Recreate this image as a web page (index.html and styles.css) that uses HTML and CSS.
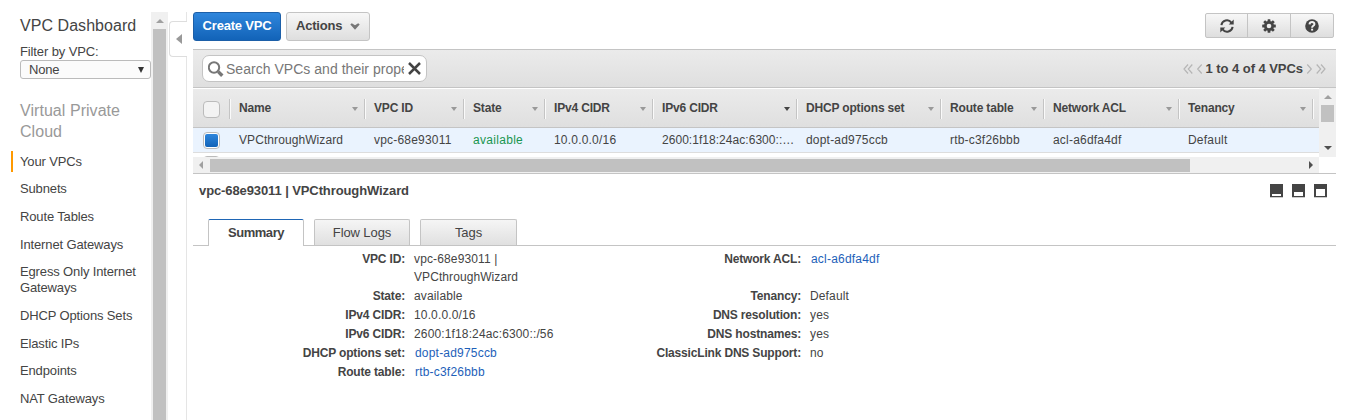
FILE: index.html
```html
<!DOCTYPE html>
<html lang="en">
  <head>
    <meta charset="UTF-8" />
    <meta name="viewport" content="width=device-width, initial-scale=1.0" />
    <title>VPC Dashboard</title>
    <link rel="stylesheet" href="styles.css">
  </head>
  <body>
    <!-- left navigation -->
    <aside class="sidebar">
      <nav class="nav">
        <h1 class="title">VPC Dashboard</h1>
        <p class="filter-label">Filter by VPC:</p>
        <div class="select"><span>None</span><i class="select-arrow"></i></div>
        <h2 class="group">Virtual Private Cloud</h2>
        <ul class="links">
          <li class="active"><a>Your VPCs</a></li>
          <li><a>Subnets</a></li>
          <li><a>Route Tables</a></li>
          <li><a>Internet Gateways</a></li>
          <li><a>Egress Only Internet Gateways</a></li>
          <li><a>DHCP Options Sets</a></li>
          <li><a>Elastic IPs</a></li>
          <li><a>Endpoints</a></li>
          <li><a>NAT Gateways</a></li>
        </ul>
      </nav>
      <div class="nav-scroll"><i class="tri up"></i><div class="thumb"></div></div>
      <div class="collapse"><div class="collapse-tab"><i class="tri left"></i></div></div>
    </aside>

    <main class="main">
      <!-- buttons -->
      <div class="actions">
        <button class="btn primary">Create VPC</button>
        <button class="btn menu">Actions
          <svg width="10" height="7" viewBox="0 0 10 7"><path d="M0.3 1.6 L1.8 0.3 L5 2.2 L8.2 0.3 L9.7 1.6 L5 6.8 Z" fill="#777" /></svg>
        </button>
        <div class="btn-group">
          <button class="icon-btn">
            <svg width="14" height="14" viewBox="0 0 14 14" fill="none" stroke="#444" stroke-width="2"><path d="M1.4 6.2 A5.6 5.6 0 0 1 11.4 3.6" /><path d="M12.6 7.8 A5.6 5.6 0 0 1 2.6 10.4" /><path d="M13.7 0.6 V5.6 H8.7 Z M0.3 13.4 V8.4 H5.3 Z" fill="#444" stroke="none" /></svg>
          </button>
          <button class="icon-btn">
            <svg width="14" height="14" viewBox="0 0 14 14"><g fill="#444"><circle cx="7" cy="7" r="5" /><g id="teeth"><rect x="5.6" y="0.2" width="2.8" height="13.6" rx="0.5" /><rect x="0.2" y="5.6" width="13.6" height="2.8" rx="0.5" /></g><use href="#teeth" transform="rotate(45 7 7)" /></g><circle cx="7" cy="7" r="2.3" fill="#ededed" /></svg>
          </button>
          <button class="icon-btn">
            <svg width="14" height="14" viewBox="0 0 14 14"><circle cx="7" cy="7" r="6.8" fill="#444" /><path d="M4.5 5.3 C4.8 2.3 9.6 2.4 9.4 5.2 C9.3 6.9 7.1 6.7 7.1 8.8" fill="none" stroke="#f0f0f0" stroke-width="2" /><rect x="6.1" y="9.7" width="2" height="1.9" fill="#f0f0f0" /></svg>
          </button>
        </div>
      </div>

      <!-- search and paging -->
      <div class="toolbar">
        <div class="search">
          <svg width="17" height="17" viewBox="0 0 17 17" fill="none" stroke="#777"><circle cx="6" cy="7.5" r="5.2" stroke-width="2" /><path d="M10.2 11.6 L14.3 15.8" stroke-width="3.4" /></svg>
          <span class="search-text">Search VPCs and their properties</span>
          <svg width="13" height="13" viewBox="0 0 13 13" fill="none" stroke="#444" stroke-width="2.5"><path d="M1 1 L12 12 M12 1 L1 12" /></svg>
        </div>
        <div class="pager">
          <svg width="20" height="10" viewBox="0 0 20 10"><path d="M5 0.5 L1 5 L5 9.5 M9.3 0.5 L5.3 5 L9.3 9.5 M18.7 0.5 L14.7 5 L18.7 9.5" /></svg>
          <span>1 to 4 of 4 VPCs</span>
          <svg width="20" height="10" viewBox="0 0 20 10"><path d="M1.3 0.5 L5.3 5 L1.3 9.5 M10.7 0.5 L14.7 5 L10.7 9.5 M15 0.5 L19 5 L15 9.5" /></svg>
        </div>
      </div>

      <!-- table -->
      <div class="table">
        <div class="table-body">
          <div class="row head">
            <div class="cell"><i class="check"></i></div>
            <div class="cell"><span>Name</span><i class="sort"></i></div>
            <div class="cell"><span>VPC ID</span><i class="sort"></i></div>
            <div class="cell"><span>State</span><i class="sort"></i></div>
            <div class="cell"><span>IPv4 CIDR</span><i class="sort"></i></div>
            <div class="cell"><span>IPv6 CIDR</span><i class="sort on"></i></div>
            <div class="cell"><span>DHCP options set</span><i class="sort"></i></div>
            <div class="cell"><span>Route table</span><i class="sort"></i></div>
            <div class="cell"><span>Network ACL</span><i class="sort"></i></div>
            <div class="cell"><span>Tenancy</span><i class="sort"></i></div>
            <div class="cell"></div>
          </div>
          <div class="row selected">
            <div class="cell"><i class="check checked"></i></div>
            <div class="cell name">VPCthroughWizard</div>
            <div class="cell">vpc-68e93011</div>
            <div class="cell green">available</div>
            <div class="cell">10.0.0.0/16</div>
            <div class="cell"><span class="clip">2600:1f18:24ac:6300::/56</span></div>
            <div class="cell">dopt-ad975ccb</div>
            <div class="cell">rtb-c3f26bbb</div>
            <div class="cell">acl-a6dfa4df</div>
            <div class="cell">Default</div>
          </div>
          <div class="row next"><i class="check"></i></div>
        </div>
        <div class="v-scroll"><i class="tri up"></i><div class="thumb"></div><i class="tri down"></i></div>
        <div class="h-scroll"><i class="tri left"></i><div class="thumb"></div><i class="tri right"></i></div>
      </div>

      <!-- details of the selected vpc -->
      <div class="detail-head">
        <span>vpc-68e93011 | VPCthroughWizard</span>
        <div class="sizes"><i class="size small"></i><i class="size medium"></i><i class="size large"></i></div>
      </div>
      <ul class="tabs">
        <li class="active">Summary</li>
        <li>Flow Logs</li>
        <li>Tags</li>
      </ul>
      <div class="details">
        <dl>
          <dt>VPC ID:</dt><dd>vpc-68e93011 |<br><span class="name">VPCthroughWizard</span></dd>
          <dt>State:</dt><dd>available</dd>
          <dt>IPv4 CIDR:</dt><dd>10.0.0.0/16</dd>
          <dt>IPv6 CIDR:</dt><dd>2600:1f18:24ac:6300::/56</dd>
          <dt>DHCP options set:</dt><dd><a>dopt-ad975ccb</a></dd>
          <dt>Route table:</dt><dd><a>rtb-c3f26bbb</a></dd>
        </dl>
        <dl>
          <dt>Network ACL:</dt><dd><a>acl-a6dfa4df</a></dd>
          <dt>Tenancy:</dt><dd>Default</dd>
          <dt>DNS resolution:</dt><dd>yes</dd>
          <dt>DNS hostnames:</dt><dd>yes</dd>
          <dt>ClassicLink DNS Support:</dt><dd>no</dd>
        </dl>
      </div>
    </main>
  </body>
</html>
```
FILE: styles.css
```css
* {
  margin: 0;
  padding: 0;
  box-sizing: border-box;
}
body {
  display: flex;
  height: 420px;
  overflow: hidden;
  background: #fff;
  color: #444;
  font: 12px/18px "Liberation Sans", Arial, sans-serif;
}
ul {
  list-style: none;
}
svg,
i {
  display: block;
  flex: none;
}

/* scrollbar arrows */
.tri {
  border: 4px solid transparent;
}
.tri.up {
  border-width: 0 4px 4px;
  border-bottom-color: #a0a0a0;
}
.tri.down {
  border-width: 4px 4px 0;
  border-top-color: #505050;
}
.tri.left {
  border-width: 4px 4px 4px 0;
  border-right-color: #a0a0a0;
}
.tri.right {
  border-width: 4px 0 4px 4px;
  border-left-color: #505050;
}
.thumb {
  background: #c1c1c1;
}

/* sidebar */
.sidebar {
  display: flex;
  flex: none;
  width: 193px;
  padding-top: 12px;
}
.nav {
  width: 151px;
  padding-left: 20px;
}
.title {
  padding-top: 1px;
  font-size: 16px;
  font-weight: normal;
  line-height: 26px;
  letter-spacing: 0.05px;
}
.filter-label {
  margin-top: 4px;
  font-size: 13px;
  line-height: 17px;
  letter-spacing: -0.12px;
}
.select {
  display: flex;
  align-items: center;
  justify-content: space-between;
  height: 19px;
  padding: 0 6px 0 8px;
  border: 1px solid #bbb;
  border-radius: 3px;
  background: #fbfbfb;
  font-size: 13px;
  letter-spacing: -0.2px;
}
.select-arrow {
  border: 4px solid transparent;
  border-width: 6px 3.5px 0;
  border-top-color: #333;
}
.group {
  margin-top: 21px;
  color: #999;
  font-size: 16px;
  font-weight: normal;
  line-height: 21px;
  letter-spacing: 0.05px;
}
.links {
  margin: 9px 0 0 -9px;
  font-size: 13px;
  line-height: 16px;
  letter-spacing: -0.14px;
}
.links li {
  margin-bottom: 6.7px;
  padding: 2.5px 0 2.5px 9px;
}
.links li.active {
  padding-left: 7px;
  border-left: 2px solid #f90;
}
.nav-scroll {
  display: flex;
  flex-direction: column;
  align-items: center;
  width: 17px;
  padding-top: 7px;
  background: #f0f0f0;
}
.nav-scroll .thumb {
  flex: 1;
  width: 13px;
  margin: 6px 2px 0;
}
.collapse {
  display: flex;
  width: 19px;
  border-right: 1px solid #e5e5e5;
}
.collapse-tab {
  display: flex;
  align-items: center;
  justify-content: center;
  width: 18px;
  height: 36px;
  margin: 9px -1px 0 1px;
  border: 1px solid #ddd;
  border-right: 0;
  border-radius: 4px 0 0 4px;
  background: #fff;
}
.collapse-tab .tri {
  border-width: 5px 6px 5px 0;
  border-right-color: #999;
}

/* top buttons */
.main {
  width: 1143px;
  padding-top: 12px;
}
.actions {
  display: flex;
  height: 37px;
}
.btn,
.icon-btn {
  border: 1px solid #c4c4c4;
  background: linear-gradient(#f7f7f7, #dedede);
  color: #444;
}
.btn {
  height: 29px;
  padding-bottom: 2px;
  border-radius: 3px;
  font: bold 13px "Liberation Sans", Arial, sans-serif;
  letter-spacing: -0.2px;
}
.primary {
  width: 88px;
  margin-right: 5px;
  border-color: #1c5fa8;
  background: linear-gradient(#2f86dc, #1263b8);
  color: #fff;
}
.menu {
  display: flex;
  align-items: center;
  justify-content: space-between;
  width: 84px;
  padding: 0 9px 2px;
}
.menu svg {
  margin-top: 1px;
}
.btn-group {
  display: flex;
  height: 25px;
  margin: 1px 2px 0 auto;
}
.icon-btn {
  display: flex;
  align-items: center;
  justify-content: center;
  width: 44px;
  margin-left: -1px;
}
.icon-btn:first-child {
  width: 43px;
  border-radius: 2px 0 0 2px;
}
.icon-btn:last-child {
  border-radius: 0 2px 2px 0;
}

/* search bar */
.toolbar {
  display: flex;
  align-items: center;
  justify-content: space-between;
  height: 39px;
  padding: 0 9px;
  border: 1px solid #c4c4c4;
  border-width: 1px 0;
  background: linear-gradient(#ebebeb, #dfdfdf);
}
.search {
  display: flex;
  align-items: center;
  width: 225px;
  height: 27px;
  padding: 0 5px;
  border: 1px solid #c4c4c4;
  border-radius: 7px;
  background: #fff;
}
.search-text {
  flex: 1;
  margin: 0 4px 0 1px;
  overflow: hidden;
  color: #777;
  font-size: 14px;
  letter-spacing: 0.03px;
  white-space: nowrap;
}
.pager {
  display: flex;
  align-items: center;
  gap: 3px;
  margin-right: 1px;
  font-size: 13px;
  font-weight: bold;
  letter-spacing: -0.05px;
}
.pager path {
  fill: none;
  stroke: #b5b5b5;
  stroke-width: 1.2;
}

/* table */
.table {
  display: grid;
  grid-template: 69px 16px / 1126px 17px;
  height: 86px;
  border-bottom: 1px solid #c4c4c4;
}
.table-body {
  overflow: hidden;
}
.row {
  display: grid;
  grid-template-columns: 36px 135px 99px 81px 108px 144px 144px 103px 135px 134px 7px;
}
.cell {
  display: flex;
  align-items: center;
  min-width: 0;
  padding-left: 10px;
  letter-spacing: 0.2px;
  white-space: nowrap;
}
.head {
  height: 40px;
  padding: 10px 0;
  border-top: 1px solid #fff;
  border-bottom: 1px solid #c4c4c4;
  background: linear-gradient(#ebebeb, #dfdfdf);
  font-weight: bold;
}
.head .cell {
  letter-spacing: -0.17px;
}
.head .cell span {
  padding-bottom: 2px;
}
.head .cell + .cell {
  padding-left: 9px;
  border-left: 1px solid #c4c4c4;
  box-shadow: inset 1px 0 #fafafa;
}
.sort {
  margin: 0 6px 0 auto;
  border: 4px solid transparent;
  border-width: 4px 3.5px 0;
  border-top-color: #999;
}
.sort.on {
  border-top-color: #444;
}
.selected {
  height: 25px;
  border-bottom: 1px solid #ddd;
  background: #eaf3fe;
}
.cell.green {
  color: #1a9650;
  letter-spacing: 0.3px;
}
.name,
.cell.name {
  letter-spacing: 0.08px;
}
.clip {
  width: 134px;
  overflow: hidden;
  letter-spacing: 0.04px;
  text-overflow: ellipsis;
}
.check {
  width: 17px;
  height: 17px;
  border: 1px solid #bbb;
  border-radius: 4px;
  background: #f3f3f3;
}
.check.checked {
  padding: 1px;
  background: linear-gradient(#2f86dc, #1263b8) content-box, #fff;
}
.next {
  padding: 3px 10px 0;
}
.v-scroll {
  display: flex;
  flex-direction: column;
  align-items: center;
  padding: 7px 0;
  background: #f0f0f0;
}
.v-scroll .thumb {
  width: 13px;
  height: 17px;
  margin: 6px 0 auto;
}
.h-scroll {
  display: flex;
  align-items: center;
  padding: 0 6px;
  background: #f0f0f0;
}
.h-scroll .thumb {
  width: 980px;
  height: 13px;
  margin: 1px auto 0 7px;
}

/* details */
.detail-head {
  display: flex;
  align-items: center;
  justify-content: space-between;
  height: 33px;
  padding: 0 9px 0 6px;
  font-size: 13px;
  font-weight: bold;
  letter-spacing: -0.1px;
}
.sizes {
  display: flex;
  gap: 9px;
}
.size {
  width: 13px;
  height: 13px;
  border: 2px solid #444;
  border-bottom-width: 1px;
  background: #fff;
  box-shadow: 0 1px #ccc;
}
.small {
  border-top-width: 10px;
}
.medium {
  border-top-width: 8px;
}
.large {
  border-top-width: 5px;
}
.tabs {
  display: flex;
  gap: 10px;
  height: 39px;
  padding: 12px 15px 0;
  border-bottom: 1px solid #c4c4c4;
}
.tabs li {
  width: 97px;
  height: 26px;
  border: 1px solid #c4c4c4;
  border-bottom: 0;
  border-radius: 2px 2px 0 0;
  background: linear-gradient(#f5f5f5, #e0e0e0);
  font-size: 13px;
  letter-spacing: -0.1px;
  line-height: 26px;
  text-align: center;
}
.tabs li:nth-child(2) {
  width: 96px;
}
.tabs .active {
  width: 96px;
  height: 27px;
  border-top-color: #1f66b5;
  background: #fff;
  font-weight: bold;
  letter-spacing: -0.45px;
}
.details {
  display: flex;
  padding-top: 4px;
}
.details dl {
  display: grid;
  grid-template-columns: 212px 182px;
  grid-template-rows: 37px;
  grid-auto-rows: 19px;
  column-gap: 9px;
  align-content: start;
}
.details dl + dl {
  margin-left: -7px;
}
.details dt {
  font-weight: bold;
  letter-spacing: -0.17px;
  text-align: right;
}
.details dd {
  letter-spacing: 0.14px;
}
.details a {
  margin-left: 1px;
  color: #1e5fb9;
  letter-spacing: 0.2px;
}
```
